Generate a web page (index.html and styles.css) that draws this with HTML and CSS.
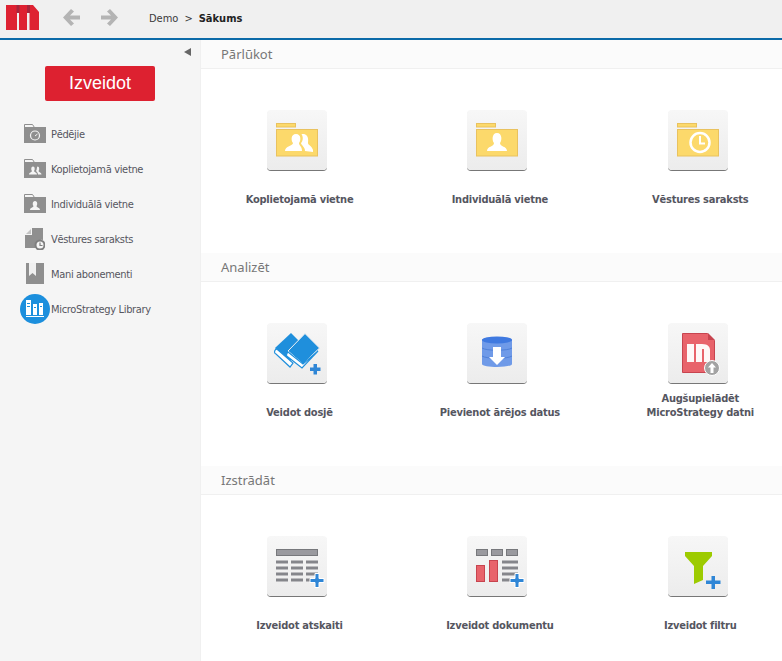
FILE: index.html
```html
<!DOCTYPE html>
<html lang="en">
<head>
    <meta charset="UTF-8">
    <meta name="viewport" content="width=device-width, initial-scale=1.0">
    <title>MicroStrategy</title>
    <link rel="stylesheet" href="styles.css">
</head>
<body>
    <header class="topbar">
        <svg class="logo" width="33" height="25" viewBox="0 0 33 25">
            <path fill="#de2232" d="M0 0h27l6 7v18h-9.500V8H21v17h-8V8h-2v17H0z"/>
            <path fill="#a8263c" d="M10.500 0h3v8h-3zM21 0h3v8h-3z"/>
        </svg>
        <svg class="nav-arrow" width="17" height="17" viewBox="0 0 17 17"><path fill="#b4b4b4" d="M8 0l3 2.500-4 4h10v4H7l4 4-3 2.500-8-8.500z"/></svg>
        <svg class="nav-arrow next" width="17" height="17" viewBox="0 0 17 17"><path fill="#b4b4b4" d="M9 0L6 2.500l4 4H0v4h10l-4 4 3 2.500 8-8.500z"/></svg>
        <div class="crumbs">
            <span>Demo</span>
            <span class="crumb-sep">&gt;</span>
            <strong>Sākums</strong>
        </div>
    </header>

    <div class="layout">
        <aside class="sidebar">
            <div class="collapse-row"><span class="collapse"></span></div>
            <button class="create-btn">Izveidot</button>
            <ul class="side-nav">
                <li>
                    <span class="side-icon">
                        <svg width="22" height="19" viewBox="0 0 22 19">
                            <path fill="none" stroke="#8f8f8f" d="M.5 4V.5h8l2 3"/>
                            <path fill="#8f8f8f" d="M0 3h22v16H0z"/>
                            <circle cx="11" cy="11.500" r="4.500" fill="none" stroke="#f5f5f5" stroke-width="1.200"/>
                            <path fill="none" stroke="#f5f5f5" d="M11 12l2.500-2"/>
                        </svg>
                    </span>
                    <span class="side-text">Pēdējie</span>
                </li>
                <li>
                    <span class="side-icon">
                        <svg width="22" height="19" viewBox="0 0 22 19">
                            <path fill="none" stroke="#8f8f8f" d="M.5 4V.5h8l2 3"/>
                            <path fill="#8f8f8f" d="M0 3h22v16H0z"/>
                            <path fill="#f5f5f5" d="M5 15.500c0-2 3-2.500 3-3.500-1-.8-1.200-4.500 1-4.500s2 3.700 1 4.500c0 1 3 1.500 3 3.500z"/>
                            <path fill="#f5f5f5" d="M14 15.500c0-2-1.500-3-2-3.500 1-1 .8-4.500 1.500-4.500 2.200 0 2 3.700 1 4.500 0 1 3 1.500 3 3.500z"/>
                        </svg>
                    </span>
                    <span class="side-text">Koplietojamā vietne</span>
                </li>
                <li>
                    <span class="side-icon">
                        <svg width="22" height="19" viewBox="0 0 22 19">
                            <path fill="none" stroke="#8f8f8f" d="M.5 4V.5h8l2 3"/>
                            <path fill="#8f8f8f" d="M0 3h22v16H0z"/>
                            <path fill="#f5f5f5" d="M6 16c0-2.500 3.500-2.500 3.500-4-1-.8-1.300-5 1.500-5s2.500 4.200 1.500 5c0 1.500 3.500 1.500 3.500 4z"/>
                        </svg>
                    </span>
                    <span class="side-text">Individuālā vietne</span>
                </li>
                <li>
                    <span class="side-icon">
                        <svg width="20" height="22" viewBox="0 0 20 22">
                            <path fill="#c4c4c4" d="M1 6l5-5v5z"/>
                            <path fill="#8f8f8f" d="M7 0h11v12a6 6 0 0 0-7 8H0V7h7z"/>
                            <circle cx="15" cy="17" r="4.500" fill="none" stroke="#7f7f7f" stroke-width="2"/>
                            <path fill="none" stroke="#7f7f7f" stroke-width="1.200" d="M15 14.500V17.500h2.500"/>
                        </svg>
                    </span>
                    <span class="side-text">Vēstures saraksts</span>
                </li>
                <li>
                    <span class="side-icon">
                        <svg width="18" height="21" viewBox="0 0 18 21">
                            <path fill="#8f8f8f" d="M0 0h18v21H0z"/>
                            <path fill="#f0f0f0" d="M3 0h7v13l-3.500-3L3 13z"/>
                        </svg>
                    </span>
                    <span class="side-text">Mani abonementi</span>
                </li>
                <li>
                    <span class="side-icon library">
                        <svg width="18" height="17" viewBox="0 0 18 17">
                            <path fill="#fff" d="M0 0h5v15H0zM7 4h4v11H7zM13 3h4v12h-4z"/>
                            <path fill="#1c8fdd" d="M1 3h3v1H1zM1 6h3v1H1zM8 7h2v1H8zM14 6h2v1h-2z"/>
                            <path fill="#fff" d="M0 16h18v1H0z"/>
                        </svg>
                    </span>
                    <span class="side-text">MicroStrategy Library</span>
                </li>
            </ul>
        </aside>

        <main class="content">
            <section>
                <h2 class="section-title">Pārlūkot</h2>
                <div class="tiles">
                    <div class="tile-item">
                        <div class="tile">
                            <svg width="60" height="60" viewBox="0 0 60 60">
                                <rect class="folder" x="9.500" y="13.500" width="19" height="3.500"/>
                                <rect class="folder" x="9.500" y="19.500" width="41" height="26.500"/>
                                <path fill="#fff" d="M18 41c0-5 8-5 8-8-2-2-2.500-9 3-9s5 7 3 9c0 3 3 3 3 8z"/>
                                <path fill="#fff" d="M36 24c3 0 6 2 5 9 0 2 4 3 5 7v2l-8-1c0-4-4-6-4-8 2-2 2.500-6 .5-9z"/>
                            </svg>
                        </div>
                        <p class="tile-label">Koplietojamā vietne</p>
                    </div>
                    <div class="tile-item">
                        <div class="tile">
                            <svg width="60" height="60" viewBox="0 0 60 60">
                                <rect class="folder" x="9.500" y="13.500" width="19" height="3.500"/>
                                <rect class="folder" x="9.500" y="19.500" width="41" height="26.500"/>
                                <path fill="#fff" d="M20 41c0-5 7-4 7-8-2-2-2.500-10 3-10s5 8 3 10c0 4 7 3 7 8z"/>
                            </svg>
                        </div>
                        <p class="tile-label">Individuālā vietne</p>
                    </div>
                    <div class="tile-item">
                        <div class="tile">
                            <svg width="60" height="60" viewBox="0 0 60 60">
                                <rect class="folder" x="9.500" y="13.500" width="19" height="3.500"/>
                                <rect class="folder" x="9.500" y="19.500" width="41" height="26.500"/>
                                <circle cx="32" cy="32.500" r="9.500" fill="none" stroke="#fff" stroke-width="2.500"/>
                                <path fill="none" stroke="#fff" stroke-width="2" d="M32 26v7.500h5"/>
                            </svg>
                        </div>
                        <p class="tile-label">Vēstures saraksts</p>
                    </div>
                </div>
            </section>

            <section>
                <h2 class="section-title">Analizēt</h2>
                <div class="tiles">
                    <div class="tile-item">
                        <div class="tile">
                            <svg width="60" height="60" viewBox="0 0 60 60">
                                <path fill="#1f8fdc" d="M8 25L24 10l14 14-15 14z"/>
                                <path fill="#fff" stroke="#1f8fdc" stroke-width="1.200" d="M9 26c-2 2-2 4 0 5l14 13 3-4-15-13z"/>
                                <path fill="#1f8fdc" stroke="#f3f3f3" d="M21 28L38 10.500 52.500 25 36 41z"/>
                                <path fill="#fff" stroke="#1f8fdc" stroke-width="1.200" d="M21 29c-2 2-2 4 0 5l14 11 16-17-15 13z"/>
                                <path fill="#2f86d6" d="M46.500 41h3.500v3.500h3.500V48H50v3.500h-3.500V48H43v-3.500h3.500z"/>
                            </svg>
                        </div>
                        <p class="tile-label">Veidot dosjē</p>
                    </div>
                    <div class="tile-item">
                        <div class="tile">
                            <svg width="60" height="60" viewBox="0 0 60 60">
                                <path fill="#6f9ae8" d="M15 17c0-4 30-4 30 0v24c0 4-30 4-30 0z"/>
                                <ellipse cx="30" cy="17" rx="15" ry="3.500" fill="#3f79e0"/>
                                <path fill="none" stroke="#4f80d8" d="M15 25c4 3 26 3 30 0M15 33c4 3 26 3 30 0"/>
                                <path fill="#fff" d="M26 24h8v10h4l-8 8-8-8h4z"/>
                            </svg>
                        </div>
                        <p class="tile-label">Pievienot ārējos datus</p>
                    </div>
                    <div class="tile-item">
                        <div class="tile">
                            <svg width="60" height="60" viewBox="0 0 60 60">
                                <path fill="#e8636b" stroke="#c7444f" d="M14.500 10.500h25l7 7v32h-32z"/>
                                <path fill="#c7444f" d="M40 10l7 7h-7z"/>
                                <path fill="#fff" d="M19 21h7v18h-7zM28 21h6c6 0 8 3 8 6v12h-6V26h-2v13h-6z" opacity=".95"/>
                                <circle cx="44" cy="45" r="7.500" fill="#a3a3a3" stroke="#fff"/>
                                <path fill="#fff" d="M44 40l4 4.500h-2.500V50h-3v-5.500H40z"/>
                            </svg>
                        </div>
                        <p class="tile-label">Augšupielādēt MicroStrategy datni</p>
                    </div>
                </div>
            </section>

            <section>
                <h2 class="section-title">Izstrādāt</h2>
                <div class="tiles">
                    <div class="tile-item">
                        <div class="tile">
                            <svg width="60" height="60" viewBox="0 0 60 60">
                                <rect class="grid-head" x="9.500" y="13.500" width="41" height="6"/>
                                <path class="grid-line" d="M9 26h12M24 26h12M39 26h12M9 32h12M24 32h12M39 32h12M9 38h12M24 38h12M39 38h12M9 44h12M24 44h12M39 44h6"/>
                                <path fill="#2f86d6" stroke="#fff" d="M48 37.500h4v5h5v4h-5v5h-4v-5h-5v-4h5z"/>
                            </svg>
                        </div>
                        <p class="tile-label">Izveidot atskaiti</p>
                    </div>
                    <div class="tile-item">
                        <div class="tile">
                            <svg width="60" height="60" viewBox="0 0 60 60">
                                <rect class="grid-head" x="9.500" y="13.500" width="11" height="6"/>
                                <rect class="grid-head" x="24.500" y="13.500" width="11" height="6"/>
                                <rect class="grid-head" x="39.500" y="13.500" width="11" height="6"/>
                                <rect fill="#e8636b" stroke="#c7444f" x="9.500" y="29.500" width="8" height="16"/>
                                <rect fill="#e8636b" stroke="#c7444f" x="22.500" y="24.500" width="8" height="21"/>
                                <path class="grid-line" d="M35 26h16M35 32h16M35 38h16M35 44h8"/>
                                <path fill="#2f86d6" stroke="#fff" d="M48 37.500h4v5h5v4h-5v5h-4v-5h-5v-4h5z"/>
                            </svg>
                        </div>
                        <p class="tile-label">Izveidot dokumentu</p>
                    </div>
                    <div class="tile-item">
                        <div class="tile">
                            <svg width="60" height="60" viewBox="0 0 60 60">
                                <path fill="#9dcb00" d="M17 16h27v4L35 30v14l-9 4V30L17 20z"/>
                                <path fill="#2f86d6" d="M43.500 40h3.500v4.500h5.500V48H47v5h-3.500v-5H38v-3.500h5.500z"/>
                            </svg>
                        </div>
                        <p class="tile-label">Izveidot filtru</p>
                    </div>
                </div>
            </section>
        </main>
    </div>
</body>
</html>
```

FILE: styles.css
```css
:root {
    --brand-blue: #0b6aa8;
    --text-dark: #3a3a3a;
    --text-grey: #55565f;
    --side-bg: #f5f5f5;
}

body {
    margin: 0;
    height: 100vh;
    overflow: hidden;
    font-family: 'DejaVu Sans Condensed', 'DejaVu Sans', sans-serif;
    font-stretch: condensed;
    font-size: 11px;
    color: var(--text-dark);
    background: white;
}

.topbar {
    display: flex;
    align-items: flex-start;
    height: 38px;
    background: #f0f0f0;
    border-bottom: 2px solid var(--brand-blue);
}

.logo {
    margin: 5px 0 0 6px;
}

.nav-arrow {
    margin: 9px 0 0 24px;
}

.nav-arrow.next {
    margin-left: 21px;
}

.crumbs {
    display: flex;
    align-items: center;
    height: 36px;
    margin-left: 31px;
    color: var(--text-dark);
}

.crumb-sep {
    margin: 0 6px;
}

.crumbs strong {
    color: #222;
}

.layout {
    display: flex;
    height: calc(100vh - 40px);
}

.sidebar {
    width: 200px;
    flex-shrink: 0;
    background: var(--side-bg);
    border-right: 1px solid #f0f0f0;
}

.collapse-row {
    display: flex;
    justify-content: flex-end;
    height: 26px;
    padding: 8px 9px 0 0;
    box-sizing: border-box;
}

.collapse {
    width: 0;
    height: 0;
    border-top: 4px solid transparent;
    border-bottom: 4px solid transparent;
    border-right: 7px solid #666;
}

.create-btn {
    display: block;
    width: 110px;
    height: 35px;
    margin: 0 0 15px 45px;
    padding: 0;
    background: #dd2130;
    color: white;
    border: none;
    border-radius: 2px;
    font-family: 'Liberation Sans', sans-serif;
    font-stretch: normal;
    font-size: 18px;
}

.side-nav {
    list-style: none;
    margin: 0;
    padding: 0 0 0 20px;
}

.side-nav li {
    display: flex;
    align-items: center;
    height: 35px;
    color: var(--text-grey);
}

.side-icon {
    display: flex;
    align-items: center;
    justify-content: center;
    width: 30px;
    height: 30px;
    margin-right: 1px;
}

.side-text {
    padding-top: 2px;
    letter-spacing: -0.33px;
}

.library {
    background: #1c8fdd;
    border-radius: 50%;
}

.content {
    flex: 1;
}

.section-title {
    height: 28px;
    margin: 0;
    padding-left: 20px;
    background: #fbfbfb;
    border-bottom: 1px solid #f0f0f0;
    font-family: 'Noto Sans', sans-serif;
    font-stretch: normal;
    font-size: 13px;
    font-weight: normal;
    line-height: 28px;
    color: #777;
}

.tiles {
    display: grid;
    grid-template-columns: repeat(3, 140px);
    column-gap: 60.4px;
    height: 143px;
    padding: 41px 0 0 26px;
}

.tile-item {
    display: flex;
    flex-direction: column;
    align-items: center;
}

.tile {
    width: 60px;
    height: 60px;
    background: linear-gradient(#f7f7f7, #ececec);
    border-radius: 4px;
    box-shadow: 0 1px 0 #777;
}

.tile svg {
    display: block;
}

.tile-label {
    display: flex;
    align-items: flex-end;
    justify-content: center;
    height: 28px;
    margin: 9px 0 0;
    padding-left: 5px;
    font-weight: bold;
    line-height: 14px;
    letter-spacing: -0.22px;
    text-align: center;
    color: var(--text-grey);
}

.folder {
    fill: #fcd96b;
    stroke: #e9c25f;
}

.grid-head {
    fill: #9a9a9f;
    stroke: #77787c;
}

.grid-line {
    fill: none;
    stroke: #85868b;
    stroke-width: 3;
}
```
